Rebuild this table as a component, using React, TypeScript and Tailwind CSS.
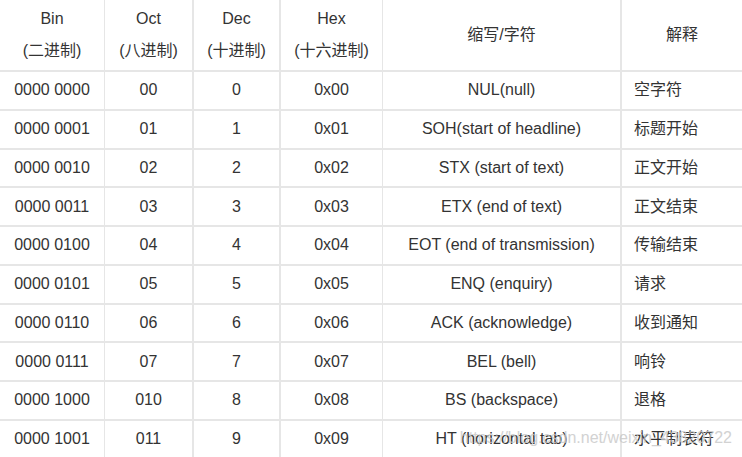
import React from "react";

const rows: [string, string, string, string, string, string][] = [
  ["0000 0000", "00", "0", "0x00", "NUL(null)", "空字符"],
  ["0000 0001", "01", "1", "0x01", "SOH(start of headline)", "标题开始"],
  ["0000 0010", "02", "2", "0x02", "STX (start of text)", "正文开始"],
  ["0000 0011", "03", "3", "0x03", "ETX (end of text)", "正文结束"],
  ["0000 0100", "04", "4", "0x04", "EOT (end of transmission)", "传输结束"],
  ["0000 0101", "05", "5", "0x05", "ENQ (enquiry)", "请求"],
  ["0000 0110", "06", "6", "0x06", "ACK (acknowledge)", "收到通知"],
  ["0000 0111", "07", "7", "0x07", "BEL (bell)", "响铃"],
  ["0000 1000", "010", "8", "0x08", "BS (backspace)", "退格"],
  ["0000 1001", "011", "9", "0x09", "HT (horizontal tab)", "水平制表符"],
];

const font = "font-['Liberation_Sans','Noto_Sans_CJK_SC',sans-serif]";

function Row({ r, i }: { r: (typeof rows)[number]; i: number }) {
  return (
    <div className="grid grid-cols-[104px_88px_87px_103px_238px_122px] h-[38.75px] border-t-2 border-[#e6e6e6] items-stretch">
      <div className="flex items-center justify-center">{r[0]}</div>
      <div className="flex items-center justify-center border-l border-[#e6e6e6]">{r[1]}</div>
      <div className="flex items-center justify-center border-l-2 border-[#e6e6e6]">{r[2]}</div>
      <div className="flex items-center justify-center border-l-2 border-[#e6e6e6]">{r[3]}</div>
      <div className="flex items-center justify-center border-l border-[#e6e6e6]">{r[4]}</div>
      <div className="flex items-center pl-[12px] border-l-2 border-[#e6e6e6]">{r[5]}</div>
    </div>
  );
}

export default function App() {
  return (
    <div className={`relative w-[742px] h-[457px] overflow-hidden bg-white text-[16px] text-[#333333] ${font}`}>
      <div className="grid grid-cols-[104px_88px_87px_103px_238px_122px] h-[70px] leading-[32px] text-center">
        <div className="flex flex-col items-center justify-center">
          <span>Bin</span>
          <span>(二进制)</span>
        </div>
        <div className="flex flex-col items-center justify-center border-l border-[#e6e6e6]">
          <span>Oct</span>
          <span>(八进制)</span>
        </div>
        <div className="flex flex-col items-center justify-center border-l-2 border-[#e6e6e6]">
          <span>Dec</span>
          <span>(十进制)</span>
        </div>
        <div className="flex flex-col items-center justify-center border-l-2 border-[#e6e6e6]">
          <span>Hex</span>
          <span>(十六进制)</span>
        </div>
        <div className="flex items-center justify-center border-l border-[#e6e6e6]">缩写/字符</div>
        <div className="flex items-center justify-center border-l-2 border-[#e6e6e6]">解释</div>
      </div>
      {rows.map((r, i) => (
        <Row key={i} r={r} i={i} />
      ))}
      <div className="absolute right-[10px] top-[426px] text-[16px] text-[#c8c8c8] opacity-80 whitespace-nowrap pointer-events-none">
        https://blog.csdn.net/weixin_43820722
      </div>
    </div>
  );
}
